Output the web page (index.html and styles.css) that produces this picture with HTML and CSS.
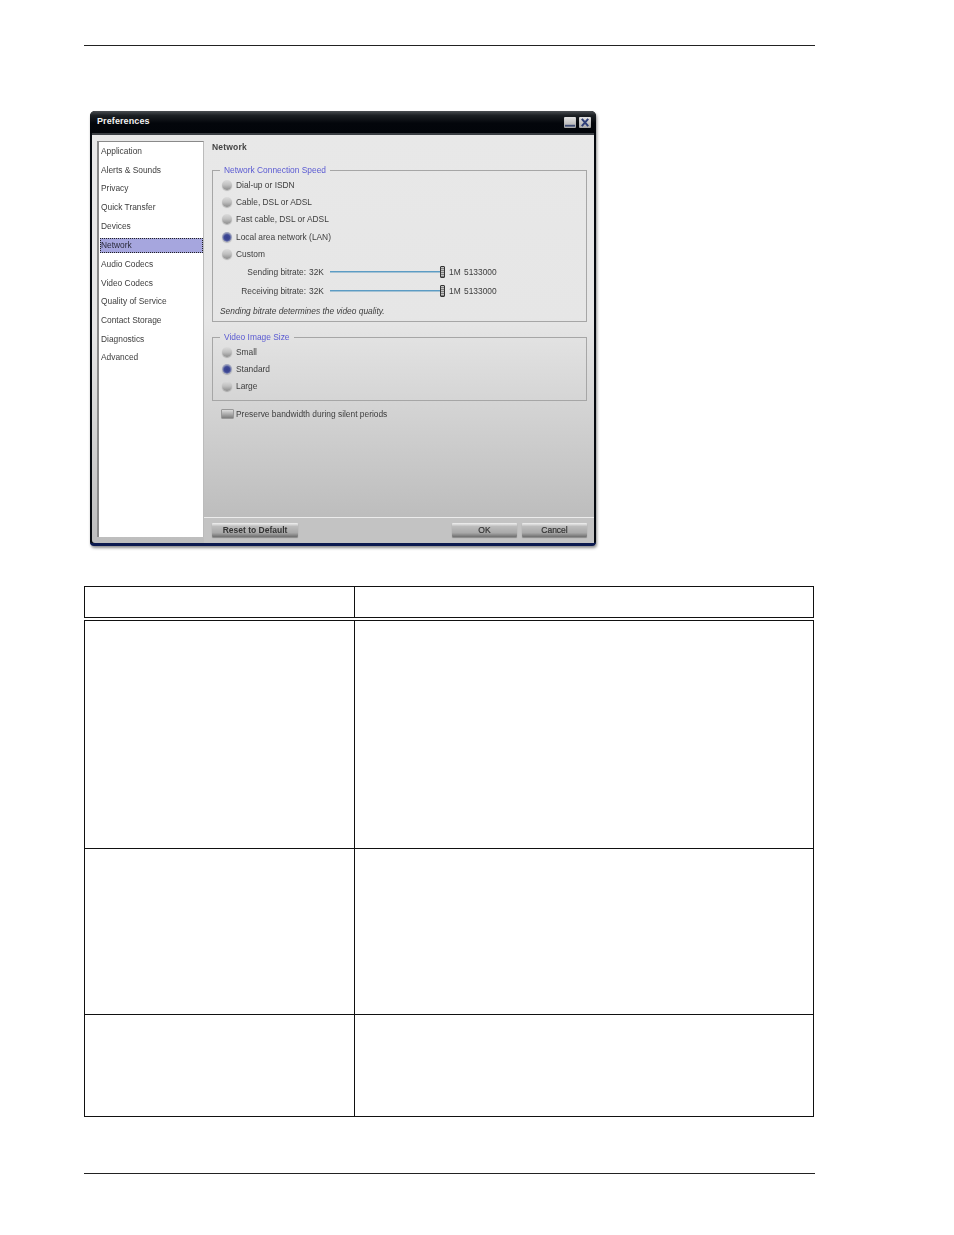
FILE: index.html
```html
<!DOCTYPE html>
<html lang="en">
<head>
<meta charset="utf-8">
<title>Preferences</title>
<link rel="stylesheet" href="styles.css">
</head>
<body>
<div class="page">
  <div class="rule top-rule"></div>
  <div class="dialog">
    <div class="titlebar">
      <span class="title">Preferences</span>
      <div class="win-buttons">
        <svg class="win-btn" viewBox="0 0 13 12"><defs><linearGradient id="g1" x1="0" y1="0" x2="0" y2="1"><stop offset="0" stop-color="#e2e2e2"/><stop offset="1" stop-color="#a9a9a9"/></linearGradient></defs><rect width="13" height="12" rx="1" fill="url(#g1)"/><rect x="1" y="8.5" width="11" height="2" fill="#3c4a72"/></svg>
        <svg class="win-btn" viewBox="0 0 13 12"><rect width="13" height="12" rx="1" fill="url(#g1)"/><path d="M3 2 L10 10 M10 2 L3 10" stroke="#2f3f78" stroke-width="2.2"/></svg>
      </div>
    </div>
    <div class="dialog-body">
      <ul class="nav">
        <li>Application</li>
        <li>Alerts &amp; Sounds</li>
        <li>Privacy</li>
        <li>Quick Transfer</li>
        <li>Devices</li>
        <li class="active">Network</li>
        <li>Audio Codecs</li>
        <li>Video Codecs</li>
        <li>Quality of Service</li>
        <li>Contact Storage</li>
        <li>Diagnostics</li>
        <li>Advanced</li>
      </ul>
      <div class="main">
        <div class="content">
          <h2 class="heading">Network</h2>
          <fieldset class="group group-speed">
            <legend>Network Connection Speed</legend>
            <div class="radio-row"><span class="radio"></span>Dial-up or ISDN</div>
            <div class="radio-row"><span class="radio"></span>Cable, DSL or ADSL</div>
            <div class="radio-row"><span class="radio"></span>Fast cable, DSL or ADSL</div>
            <div class="radio-row"><span class="radio on"></span>Local area network (LAN)</div>
            <div class="radio-row"><span class="radio"></span>Custom</div>
            <div class="slider-row">
              <span class="slider-label">Sending bitrate:</span><span class="slider-min">32K</span>
              <span class="track"><span class="thumb"></span></span>
              <span class="slider-max">1M</span><span class="slider-val">5133000</span>
            </div>
            <div class="slider-row">
              <span class="slider-label">Receiving bitrate:</span><span class="slider-min">32K</span>
              <span class="track"><span class="thumb"></span></span>
              <span class="slider-max">1M</span><span class="slider-val">5133000</span>
            </div>
            <p class="note">Sending bitrate determines the video quality.</p>
          </fieldset>
          <fieldset class="group group-size">
            <legend>Video Image Size</legend>
            <div class="radio-row"><span class="radio"></span>Small</div>
            <div class="radio-row"><span class="radio on"></span>Standard</div>
            <div class="radio-row"><span class="radio"></span>Large</div>
          </fieldset>
          <div class="check-row"><span class="check"></span>Preserve bandwidth during silent periods</div>
        </div>
        <div class="footer">
          <button class="btn btn-reset">Reset to Default</button>
          <span class="footer-gap"></span>
          <button class="btn btn-ok">OK</button>
          <button class="btn btn-ok">Cancel</button>
        </div>
      </div>
    </div>
  </div>
  <table class="doc-table">
    <thead>
      <tr class="row-head"><th class="col-a"></th><th></th></tr>
    </thead>
    <tbody>
      <tr class="row-1"><td></td><td></td></tr>
      <tr class="row-2"><td></td><td></td></tr>
      <tr class="row-3"><td></td><td></td></tr>
    </tbody>
  </table>
  <div class="rule bottom-rule"></div>
</div>
</body>
</html>
```
FILE: styles.css
```css
* { box-sizing: border-box; }
html, body { margin: 0; padding: 0; background: #fff; }
body { font-family: "Liberation Sans", Arial, sans-serif; }
.page { width: 954px; height: 1235px; padding: 45px 0 0 84px; }
.rule { width: 731px; height: 1px; background: #222; }

.dialog {
  width: 506px; height: 435px; margin: 65px 0 0 6px;
  display: flex; flex-direction: column;
  background: #05090f;
  border-radius: 5px 5px 4px 4px;
  border-bottom: 3px solid #0c1a50;
  box-shadow: 1px 2px 3px rgba(0,0,0,.45);
  padding: 0 2px 0 2px;
  color: #3d3d3d; font-size: 8.4px;
  filter: blur(.3px);
}
.titlebar {
  height: 22px; flex: none; margin: 0 -2px;
  display: flex; align-items: center; justify-content: space-between;
  padding: 0 5px 0 7px;
  background: linear-gradient(#4a4e52 0, #1c2024 20%, #03060b 55%, #02050a 100%);
  border-radius: 5px 5px 0 0;
}
.title { color: #f2f2f2; font-weight: bold; font-size: 9px; letter-spacing: .1px; padding-bottom: 2px; }
.win-buttons { display: flex; gap: 3px; }
.win-btn { width: 12px; height: 11px; display: block; }

.dialog-body {
  flex: 1; min-height: 0; display: flex;
  border-top: 2px solid #3b3f44;
  background: linear-gradient(#e8e8e8 0, #e6e6e6 48%, #bdbdbd 100%);
  padding-left: 5px;
  border-radius: 0 0 3px 3px;
}
.nav {
  width: 107px; height: 396px; margin: 6px 0 0 0; padding: 0 0 0 1px;
  list-style: none; background: #fff;
  border: 1px solid #8a8a8a; border-right-color: #bbb; border-bottom: 0; border-left-width: 2px;
}
.nav li { height: 18.72px; line-height: 18.72px; padding-left: 1px; white-space: nowrap; }
.nav .active {
  height: 15px; line-height: 14px; margin: 2px 0 2.2px;
  background: #a6a6de; outline: 1px dotted #222; outline-offset: -1px; color: #2a2a3c;
}
.main { flex: 1; min-width: 0; display: flex; flex-direction: column; }
.content {
  flex: 1; padding: 6px 7px 0 8px;
  background: linear-gradient(#e8e8e8 0, #e6e6e6 48%, #bdbdbd 100%);
}
.heading { margin: 0; font-size: 8.5px; line-height: 12px; font-weight: bold; color: #444; letter-spacing: .2px; }
.group { margin: 12px 0 0; padding: 1px 0 0 8px; border: 1px solid #a6a6a6; min-width: 0; }
.group legend { margin-left: -1px; padding: 0 4px; font-size: 8.4px; line-height: 10px; color: #5a5ad2; }
.group-speed { height: 157px; }
.group-size { height: 69px; margin-top: 10px; }
.radio-row { height: 17.4px; display: flex; align-items: center; gap: 4px; padding-left: 1px; white-space: nowrap; }
.radio {
  width: 10px; height: 10px; border-radius: 50%; flex: none;
  background: linear-gradient(#dcdcdc 0, #c0c0c0 50%, #8c8c8c 100%);
  box-shadow: 0 1px 1px rgba(0,0,0,.22);
}
.radio.on { background: radial-gradient(circle at 50% 55%, #343e8c 0, #3f4996 38%, #9aa0bc 62%, #b8b8c0 100%); }
.slider-row { height: 19px; display: flex; align-items: center; white-space: nowrap; }
.slider-label { width: 85px; text-align: right; }
.slider-min { width: 18px; margin-left: 3px; }
.track { position: relative; width: 115px; height: 1px; margin: 0 0 2px 3px; background: #5c9cc4; box-shadow: 0 1px 0 #a4c2d4; }
.thumb {
  position: absolute; right: 0; top: -5px; width: 5px; height: 12px;
  background: repeating-linear-gradient(#c4c4c4 0 1px, #7c7c7c 1px 2px);
  border: 1px solid #333; border-radius: 1px;
}
.slider-max { margin-left: 4px; width: 15px; }
.note { margin: 4px 0 0 -1px; font-style: italic; line-height: 12px; white-space: nowrap; }
.check-row { height: 13px; margin: 6px 0 0 9px; display: flex; align-items: center; gap: 2px; white-space: nowrap; }
.check {
  width: 13px; height: 10px; flex: none;
  background: linear-gradient(#dcdcdc, #7d7d7d); border: 1px solid #999; border-radius: 1px;
}
.footer {
  height: 26px; flex: none; display: flex; align-items: flex-start;
  padding: 5px 7px 0 8px; gap: 5px;
  background: #c3c3c3; border-top: 1px solid #ececec;
}
.footer-gap { flex: 1; }
.btn {
  height: 14px; padding: 0; margin: 0; font: bold 8.5px "Liberation Sans", Arial, sans-serif;
  color: #333;
  border: 0; border-radius: 1px;
  background: linear-gradient(#f0f0f0 0, #bcbcbc 25%, #a9a9a9 70%, #6e6e6e 100%);
  box-shadow: 0 1px 1px rgba(0,0,0,.3);
}
.btn-reset { width: 86px; }
.btn-ok { width: 65px; font-weight: normal; -webkit-text-stroke: .2px #333; }

.doc-table { width: 730px; margin-top: 40px; border-collapse: collapse; table-layout: fixed; }
.doc-table th, .doc-table td { border: 1px solid #111; padding: 0; }
.doc-table .col-a { width: 270px; }
.row-head th { height: 32px; border-bottom: 4px double #111; }
.row-1 td { height: 230px; }
.row-2 td { height: 166px; }
.row-3 td { height: 102px; }
.bottom-rule { margin-top: 56px; }
```
